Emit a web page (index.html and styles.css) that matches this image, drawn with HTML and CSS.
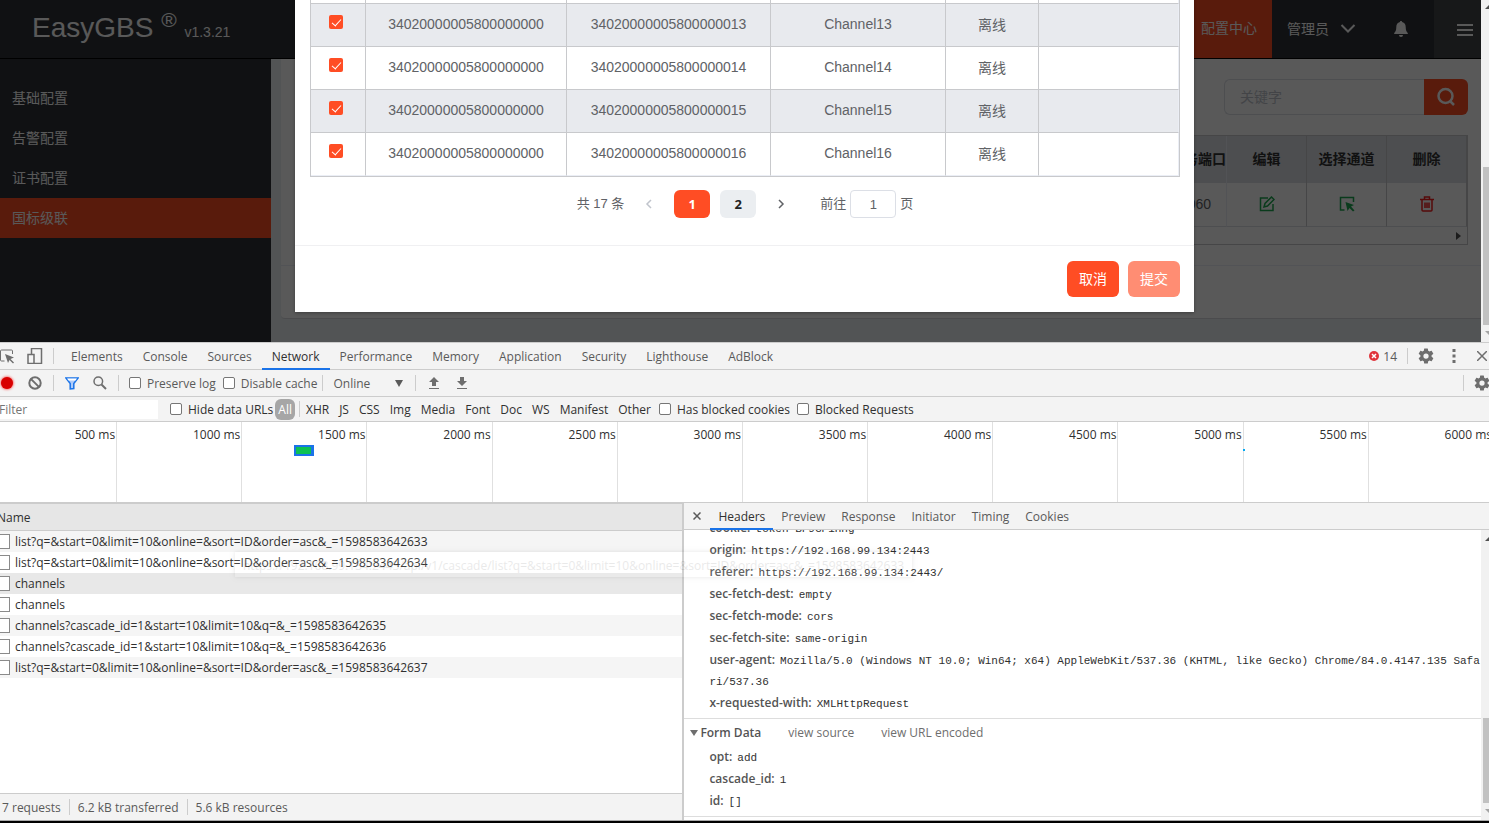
FILE: index.html
```html
<!DOCTYPE html>
<html lang="zh-CN">
<head>
  <meta charset="UTF-8" />
  <meta name="viewport" content="width=device-width, initial-scale=1.0"/>
  <title>EasyGBS</title>
  <link rel="stylesheet" href="styles.css">
</head>
<body>

  <div class="app">
    <div class="page">
      <header class="main-header">
        <a class="brand" href="#">EasyGBS <sup>®</sup> <small>v1.3.21</small></a>
        <nav class="top-nav">
          <a class="active" href="#">配置中心</a>
          <a class="user" href="#">管理员
            <svg width="16" height="16" viewBox="0 0 16 16"><path d="M1.500 4L8 10.500L14.500 4" fill="none" stroke="currentColor" stroke-width="2"/></svg>
          </a>
          <a class="bell" href="#" aria-label="消息">
            <svg width="16" height="16" viewBox="0 0 16 16"><path d="M8 0c.7 0 1.100.5 1.100 1.100C11.600 1.700 12.700 3.700 12.700 6c0 3.500.8 4.800 2.100 6v1H1.200v-1c1.300-1.200 2.100-2.500 2.100-6 0-2.300 1.100-4.300 3.600-4.900C6.900.5 7.300 0 8 0zM6 14h4a2 2 0 0 1-4 0z" fill="currentColor"/></svg>
          </a>
          <button class="menu-btn" aria-label="菜单">
            <svg width="18" height="14" viewBox="0 0 18 14"><path d="M1 2h16M1 7h16M1 12h16" stroke="currentColor" stroke-width="2"/></svg>
          </button>
        </nav>
      </header>

      <div class="wrapper">
        <aside class="sidebar">
          <a href="#">基础配置</a>
          <a href="#">告警配置</a>
          <a href="#">证书配置</a>
          <a class="active" href="#">国标级联</a>
        </aside>
        <main class="content">
          <div class="card">
            <div class="card-body">
              <form class="search">
                <input type="text" placeholder="关键字" aria-label="关键字">
                <button type="button" aria-label="搜索">
                  <svg width="20" height="20" viewBox="0 0 20 20"><circle cx="9.500" cy="9" r="7" fill="none" stroke="currentColor" stroke-width="2.500"/><path d="M14.500 14.500L18 18" stroke="currentColor" stroke-width="2.500"/></svg>
                </button>
              </form>
              <div class="cascade">
                <table>
                  <thead>
                    <tr><th class="rest">服务端口</th><th>编辑</th><th>选择通道</th><th>删除</th></tr>
                  </thead>
                  <tbody>
                    <tr>
                      <td class="rest">5060</td>
                      <td>
                        <a class="green" href="#" aria-label="编辑"><svg width="16" height="16" viewBox="0 0 16 16"><path d="M9 2H1.500v12.500H14V8" fill="none" stroke="currentColor" stroke-width="1.500"/><path d="M5 11l1-3.500L12.500 1 15 3.500 8.500 10z" fill="none" stroke="currentColor" stroke-width="1.500"/></svg></a>
                      </td>
                      <td>
                        <a class="green" href="#" aria-label="选择通道"><svg width="16" height="16" viewBox="0 0 16 16"><path d="M5.500 14H1.500V1.500h13V6" fill="none" stroke="currentColor" stroke-width="1.500"/><path d="M6.500 6l8.500 3-3 1.500 3.500 4-1.500 1-3.500-3.500L8.500 15z" fill="currentColor"/></svg></a>
                      </td>
                      <td>
                        <a class="red" href="#" aria-label="删除"><svg width="16" height="16" viewBox="0 0 16 16"><path d="M1 3.500h14M5.500 3V1h5v2M3 3.500V14q0 1 1 1h8q1 0 1-1V3.500M6 6.500v5.500M8 6.500v5.500M10 6.500v5.500" fill="none" stroke="currentColor" stroke-width="1.500"/></svg></a>
                      </td>
                    </tr>
                  </tbody>
                </table>
                <div class="hscroll">
                  <svg width="5" height="8" viewBox="0 0 5 8"><path d="M0 0l5 4-5 4z" fill="#505050"/></svg>
                </div>
              </div>
            </div>
            <div class="card-footer"></div>
          </div>
        </main>
      </div>
    </div>

    <div class="scrollbar">
      <svg width="15" height="17" viewBox="0 0 15 17"><path d="M4 9l4-4 4 4z" fill="#505050"/></svg>
      <div class="thumb page-thumb"></div>
      <svg width="15" height="17" viewBox="0 0 15 17"><path d="M4 6l4 4 4-4z" fill="#a3a3a3"/></svg>
    </div>

    <div class="overlay">
      <div class="modal">
        <div class="modal-body">
          <div class="channels">
            <table>
              <colgroup><col class="c-check"><col class="c-device"><col class="c-channel"><col class="c-name"><col class="c-state"><col></colgroup>
              <tbody>
                <tr><td></td><td></td><td></td><td></td><td></td><td></td></tr>
                <tr><td><input type="checkbox" checked aria-label="Channel13"></td><td>34020000005800000000</td><td>34020000005800000013</td><td>Channel13</td><td>离线</td><td></td></tr>
                <tr><td><input type="checkbox" checked aria-label="Channel14"></td><td>34020000005800000000</td><td>34020000005800000014</td><td>Channel14</td><td>离线</td><td></td></tr>
                <tr><td><input type="checkbox" checked aria-label="Channel15"></td><td>34020000005800000000</td><td>34020000005800000015</td><td>Channel15</td><td>离线</td><td></td></tr>
                <tr><td><input type="checkbox" checked aria-label="Channel16"></td><td>34020000005800000000</td><td>34020000005800000016</td><td>Channel16</td><td>离线</td><td></td></tr>
              </tbody>
            </table>
          </div>
          <div class="pagination">
            <span class="total">共 17 条</span>
            <button class="arrow" disabled aria-label="上一页"><svg width="8" height="10" viewBox="0 0 8 10"><path d="M6 1L2 5l4 4" fill="none" stroke="currentColor" stroke-width="1.500"/></svg></button>
            <button class="num active">1</button>
            <button class="num">2</button>
            <button class="arrow" aria-label="下一页"><svg width="8" height="10" viewBox="0 0 8 10"><path d="M2 1l4 4-4 4" fill="none" stroke="currentColor" stroke-width="1.500"/></svg></button>
            <label class="jump"><span>前往</span> <input type="text" value="1"> <span>页</span></label>
          </div>
        </div>
        <div class="modal-footer">
          <button class="btn">取消</button>
          <button class="btn" disabled>提交</button>
        </div>
      </div>
    </div>
  </div>

  <div class="devtools">
    <div class="bar tabbar">
      <button class="icon" aria-label="Inspect"><svg width="16" height="16" viewBox="0 0 16 16"><path d="M5.500 13H2.500q-1 0-1-1V3q0-1 1-1h10q1 0 1 1v3" fill="none" stroke="currentColor"/><path d="M6 6l9 3.500-3.500 1.500 3.500 3.500-1 1-3.500-3.500L9 15z" fill="currentColor"/></svg></button>
      <button class="icon" aria-label="Device"><svg width="16" height="16" viewBox="0 0 16 16"><path d="M4.500 6V.5h10v15h-7M1 6.500h6v9H1z" fill="none" stroke="currentColor" stroke-width="1.500"/></svg></button>
      <i class="sep"></i>
      <nav class="tabs">
        <a href="#">Elements</a><a href="#">Console</a><a href="#">Sources</a><a class="active" href="#">Network</a><a href="#">Performance</a><a href="#">Memory</a><a href="#">Application</a><a href="#">Security</a><a href="#">Lighthouse</a><a href="#">AdBlock</a>
      </nav>
      <a class="errors" href="#"><svg width="10" height="10" viewBox="0 0 10 10"><circle cx="5" cy="5" r="5" fill="#e0343b"/><path d="M3 3l4 4M7 3L3 7" stroke="#fff" stroke-width="1.500"/></svg>14</a>
      <i class="sep"></i>
      <button class="icon" aria-label="Settings"><svg width="18" height="18" viewBox="0 0 24 24"><use href="#gear"/></svg></button>
      <button class="icon" aria-label="More"><svg width="4" height="14" viewBox="0 0 4 14"><path d="M.5 0h3v3h-3zM.5 5.500h3v3h-3zM.5 11h3v3h-3z" fill="currentColor"/></svg></button>
      <button class="icon" aria-label="Close"><svg width="10" height="10" viewBox="0 0 10 10"><path d="M0 0l10 10M10 0L0 10" stroke="currentColor" stroke-width="1.500"/></svg></button>
    </div>

    <div class="bar">
      <button class="icon record" aria-label="Record"></button>
      <button class="icon" aria-label="Clear"><svg width="14" height="14" viewBox="0 0 14 14"><path d="M2.600 2.600l8.800 8.800" stroke="currentColor" stroke-width="2"/><circle cx="7" cy="7" r="5.700" fill="none" stroke="currentColor" stroke-width="2"/></svg></button>
      <i class="sep"></i>
      <button class="icon blue" aria-label="Filter"><svg width="14" height="13" viewBox="0 0 14 13"><path d="M1 1h12L8.800 6.500V11.500L5.200 12V6.500z" fill="#aecbfa" stroke="currentColor" stroke-width="1.500"/><path d="M2 1.500h10L10.500 3.500h-7z" fill="#fff"/></svg></button>
      <button class="icon" aria-label="Search"><svg width="14" height="14" viewBox="0 0 14 14"><circle cx="5.300" cy="5.300" r="4.300" fill="none" stroke="currentColor" stroke-width="1.500"/><path d="M8.500 8.500L13 13" stroke="currentColor" stroke-width="2"/></svg></button>
      <i class="sep"></i>
      <label class="check"><input type="checkbox">Preserve log</label>
      <label class="check"><input type="checkbox">Disable cache</label>
      <i class="sep"></i>
      <div class="throttle">
        <select aria-label="Throttling"><option>Online</option></select>
        <svg width="8" height="7" viewBox="0 0 8 7"><path d="M0 0h8L4 7z" fill="currentColor"/></svg>
      </div>
      <i class="sep"></i>
      <button class="icon" aria-label="Import"><svg width="10" height="12" viewBox="0 0 10 12"><path d="M5 0l5 5H7v4H3V5H0zM0 11h10v1H0z" fill="currentColor"/></svg></button>
      <button class="icon" aria-label="Export"><svg width="10" height="12" viewBox="0 0 10 12"><path d="M3 0h4v4h3L5 9 0 4h3zM0 11h10v1H0z" fill="currentColor"/></svg></button>
      <span class="grow"></span>
      <i class="sep"></i>
      <button class="icon" aria-label="Network settings"><svg width="18" height="18" viewBox="0 0 24 24"><path id="gear" fill="currentColor" fill-rule="evenodd" d="M19.430 12.980c.04-.32.070-.64.070-.98s-.03-.66-.07-.98l2.110-1.650c.19-.15.24-.42.12-.64l-2-3.460c-.12-.22-.39-.3-.61-.22l-2.490 1c-.52-.4-1.080-.73-1.690-.98l-.38-2.650A.49.49 0 0 0 14 2h-4c-.25 0-.46.18-.49.42l-.38 2.650c-.61.25-1.170.59-1.690.98l-2.490-1c-.23-.09-.49 0-.61.22l-2 3.460c-.13.22-.07.49.12.64l2.110 1.650c-.04.32-.07.65-.07.98s.03.66.07.98l-2.110 1.650c-.19.15-.24.42-.12.64l2 3.460c.12.22.39.3.61.22l2.490-1c.52.4 1.080.73 1.690.98l.38 2.650c.03.24.24.42.49.42h4c.25 0 .46-.18.49-.42l.38-2.650c.61-.25 1.170-.59 1.690-.98l2.490 1c.23.09.49 0 .61-.22l2-3.460c.12-.22.070-.49-.12-.64l-2.110-1.650zM12 15.500a3.500 3.500 0 1 1 0-7 3.500 3.500 0 0 1 0 7z"/></svg></button>
    </div>

    <div class="bar filterbar">
      <input class="filter-input" type="text" placeholder="Filter" aria-label="Filter">
      <label class="check"><input type="checkbox">Hide data URLs</label>
      <div class="types">
        <button class="active">All</button><i class="sep"></i><button>XHR</button><button>JS</button><button>CSS</button><button>Img</button><button>Media</button><button>Font</button><button>Doc</button><button>WS</button><button>Manifest</button><button>Other</button>
      </div>
      <label class="check"><input type="checkbox">Has blocked cookies</label>
      <label class="check"><input type="checkbox">Blocked Requests</label>
    </div>

    <div class="timeline">
      <div class="ticks">
        <span>500 ms</span><span>1000 ms</span><span>1500 ms</span><span>2000 ms</span><span>2500 ms</span><span>3000 ms</span><span>3500 ms</span><span>4000 ms</span><span>4500 ms</span><span>5000 ms</span><span>5500 ms</span><span>6000 ms</span>
      </div>
      <div class="span-main"></div>
      <div class="span-late"></div>
    </div>

    <div class="panes">
      <section class="requests">
        <div class="name-head">Name</div>
        <ul>
          <li><i></i>list?q=&amp;start=0&amp;limit=10&amp;online=&amp;sort=ID&amp;order=asc&amp;_=1598583642633</li>
          <li><i></i>list?q=&amp;start=0&amp;limit=10&amp;online=&amp;sort=ID&amp;order=asc&amp;_=1598583642634</li>
          <li class="selected"><i></i>channels</li>
          <li><i></i>channels</li>
          <li><i></i>channels?cascade_id=1&amp;start=10&amp;limit=10&amp;q=&amp;_=1598583642635</li>
          <li><i></i>channels?cascade_id=1&amp;start=10&amp;limit=10&amp;q=&amp;_=1598583642636</li>
          <li><i></i>list?q=&amp;start=0&amp;limit=10&amp;online=&amp;sort=ID&amp;order=asc&amp;_=1598583642637</li>
        </ul>
        <div class="summary">
          <span>7 requests</span><i class="sep"></i><span>6.2 kB transferred</span><i class="sep"></i><span>5.6 kB resources</span>
        </div>
      </section>

      <section class="details">
        <div class="bar">
          <button class="close" aria-label="Close details"><svg width="8" height="8" viewBox="0 0 8 8"><path d="M.5.5l7 7M7.500.5l-7 7" stroke="currentColor" stroke-width="1.500"/></svg></button>
          <nav class="tabs small">
            <a class="active" href="#">Headers</a><a href="#">Preview</a><a href="#">Response</a><a href="#">Initiator</a><a href="#">Timing</a><a href="#">Cookies</a>
          </nav>
        </div>
        <div class="details-main">
          <div class="details-body">
            <div class="group">
              <p><b>cookie:</b> <code>token=BF9GPiHHg</code></p>
              <p><b>origin:</b> <code>https://192.168.99.134:2443</code></p>
              <p><b>referer:</b> <code>https://192.168.99.134:2443/</code></p>
              <p><b>sec-fetch-dest:</b> <code>empty</code></p>
              <p><b>sec-fetch-mode:</b> <code>cors</code></p>
              <p><b>sec-fetch-site:</b> <code>same-origin</code></p>
              <p><b>user-agent:</b> <code>Mozilla/5.0 (Windows NT 10.0; Win64; x64) AppleWebKit/537.36 (KHTML, like Gecko) Chrome/84.0.4147.135 Safari/537.36</code></p>
              <p><b>x-requested-with:</b> <code>XMLHttpRequest</code></p>
            </div>
            <div class="group-head">
              <svg width="8" height="6" viewBox="0 0 8 6"><path d="M0 0h8L4 6z" fill="currentColor"/></svg>
              <b>Form Data</b><a href="#">view source</a><a href="#">view URL encoded</a>
            </div>
            <div class="group">
              <p><b>opt:</b> <code>add</code></p>
              <p><b>cascade_id:</b> <code>1</code></p>
              <p><b>id:</b> <code>[]</code></p>
            </div>
          </div>
          <div class="scrollbar">
            <svg width="15" height="17" viewBox="0 0 15 17"><path d="M4 11l4-4 4 4z" fill="#505050"/></svg>
            <div class="thumb details-thumb"></div>
            <svg width="15" height="17" viewBox="0 0 15 17"><path d="M4 6l4 4 4-4z" fill="#a3a3a3"/></svg>
          </div>
        </div>
      </section>

      <div class="tooltip">https://192.168.99.134:2443/api/v1/cascade/list?q=&amp;start=0&amp;limit=10&amp;online=&amp;sort=ID&amp;order=asc&amp;_=1598583642633</div>
    </div>
  </div>

</body>
</html>
```
FILE: styles.css
```css
* {
  box-sizing: border-box;
}
body {
  margin: 0;
  height: 100vh;
  display: flex;
  flex-direction: column;
  overflow: hidden;
  background: #000;
  font-family: "Liberation Sans", "Noto Sans CJK SC", sans-serif;
  font-size: 14px;
}
a {
  color: inherit;
  text-decoration: none;
}
button, input, select {
  font: inherit;
  color: inherit;
  margin: 0;
}
button {
  padding: 0;
  border: none;
  background: none;
  cursor: pointer;
}
svg {
  display: block;
}

/* ---------- app ---------- */
.app {
  position: relative;
  flex: 0 0 342px;
  display: flex;
  overflow: hidden;
}
.page {
  flex: 1;
  display: flex;
  flex-direction: column;
}
.main-header {
  height: 59px;
  display: flex;
  justify-content: space-between;
  background: #2e3238;
  border-bottom: 1px solid #000;
  color: #fff;
}
.brand {
  padding-left: 32px;
  font-size: 28px;
  line-height: 55px;
}
.brand sup {
  font-size: 21px;
  line-height: 1;
}
.brand small {
  font-size: 14px;
}
.top-nav {
  display: flex;
  line-height: 57px;
}
.top-nav .active {
  padding: 0 15px;
  background: #ff4d24;
}
.user {
  display: flex;
  align-items: center;
  gap: 11px;
  padding: 0 15px;
}
.bell {
  display: flex;
  align-items: center;
  padding: 0 25px 0 22px;
}
.menu-btn {
  display: flex;
  align-items: center;
  width: 47px;
  padding: 2px 0 0 22px;
  background: #424549;
}
.wrapper {
  flex: 1;
  display: flex;
}
.sidebar {
  width: 271px;
  padding-top: 19px;
  background: #2e3238;
  color: #fff;
}
.sidebar a {
  display: block;
  padding-left: 12px;
  line-height: 40px;
}
.sidebar .active {
  background: #ff4d24;
}
.content {
  flex: 1;
  padding-left: 10px;
  background: #ecf0f3;
}
.card {
  background: #fff;
  border-bottom: 1px solid #d6d8dc;
  border-radius: 0 0 0 4px;
}
.card-body {
  padding: 20px 13px 20px 20px;
}
.card-footer {
  height: 53px;
  border-top: 1px solid #ebeef5;
}
.search {
  display: flex;
  justify-content: flex-end;
  margin-bottom: 20px;
}
.search input {
  width: 200px;
  height: 36px;
  padding: 0 15px;
  border: 1px solid #dcdfe6;
  border-right: none;
  border-radius: 6px 0 0 6px;
  background: #fff;
}
.search input::placeholder {
  color: #c0c4cc;
}
.search button {
  width: 44px;
  display: flex;
  align-items: center;
  justify-content: center;
  border-radius: 0 6px 6px 0;
  background: #ff4d24;
  color: #fff;
}
.cascade {
  border: 1px solid #c8c9cc;
}
.cascade table {
  width: 100%;
  border-spacing: 0;
  text-align: center;
}
.cascade th {
  width: 80px;
  height: 47px;
  padding: 0 0 3px;
  background: #dcdfe6;
  border-right: 1px solid #c8c9cc;
  color: #333;
  font-weight: bold;
}
.cascade td {
  height: 44px;
  padding: 0 0 1px;
  border-right: 1px solid #c8c9cc;
  border-bottom: 1px solid #dcdfe6;
  color: #606266;
}
.cascade .rest {
  width: auto;
  padding-right: 15px;
  border-right-color: #ebeef5;
  text-align: right;
}
.cascade th.rest {
  padding-right: 0;
}
.cascade a svg {
  margin: 0 auto;
}
.green {
  color: #1fa951;
}
.red {
  color: #f51c1c;
}
.hscroll {
  height: 17px;
  display: flex;
  align-items: center;
  justify-content: flex-end;
  padding-right: 6px;
}

/* modal */
.overlay {
  position: absolute;
  inset: 0 8px 0 0;
  display: flex;
  align-items: flex-end;
  justify-content: center;
  padding: 0 0 30px 8px;
  background: rgba(0, 0, 0, 0.65);
}
.modal {
  width: 899px;
  background: #fff;
  box-shadow: 0 1px 3px rgba(0, 0, 0, 0.3);
}
.modal-body {
  padding: 15px 14px 27px 15px;
}
.channels {
  border: 1px solid #c8c9cc;
}
.channels table {
  width: 100%;
  table-layout: fixed;
  border-spacing: 0;
  text-align: center;
  color: #606266;
}
.c-check { width: 55px; }
.c-device { width: 201px; }
.c-channel { width: 204px; }
.c-name { width: 175px; }
.c-state { width: 93px; }
.channels td {
  height: 43px;
  padding: 0 0 2px;
  border-right: 1px solid #c8c9cc;
  border-bottom: 1px solid #c8c9cc;
}
.channels td:last-child {
  border-right-color: #ebeef5;
}
.channels tr:last-child td {
  border-bottom-color: #ebeef5;
}
.channels tr:nth-child(even) {
  background: #e8eaee;
}
.channels input {
  appearance: none;
  display: block;
  width: 14px;
  height: 14px;
  margin: 0 auto 5px 18px;
  border-radius: 2px;
  background: #ff4d24;
}
.channels input::after {
  content: "";
  display: block;
  width: 4px;
  height: 8px;
  margin: 2px 0 0 5px;
  border: solid #fff;
  border-width: 0 1px 1px 0;
  transform: rotate(42deg);
}
.pagination {
  display: flex;
  align-items: center;
  justify-content: center;
  gap: 10px;
  margin-top: 13px;
  font-size: 13px;
  color: #606266;
}
.pagination button {
  height: 28px;
  display: flex;
  align-items: center;
  justify-content: center;
}
.pagination span {
  padding-bottom: 3px;
}
.arrow {
  width: 30px;
}
.arrow:disabled {
  color: #c0c4cc;
}
.num {
  width: 36px;
  border-radius: 6px;
  background: #ebeef1;
  color: #222;
  font-family: "Open Sans", sans-serif;
  font-weight: bold;
}
.num.active {
  background: #ff4d24;
  color: #fff;
}
.jump {
  display: flex;
  align-items: center;
  gap: 4px;
  margin-left: 14px;
}
.jump input {
  width: 46px;
  height: 28px;
  border: 1px solid #dcdfe6;
  border-radius: 4px;
  text-align: center;
}
.modal-footer {
  display: flex;
  justify-content: flex-end;
  gap: 9px;
  padding: 15px 14px 15px 15px;
  border-top: 1px solid #f0f0f2;
}
.btn {
  width: 52px;
  height: 36px;
  padding-bottom: 2px;
  border-radius: 6px;
  background: #ff4d24;
  color: #fff;
}
.btn:disabled {
  background: #ff8d73;
}

/* scrollbars */
.scrollbar {
  display: flex;
  flex-direction: column;
  flex: 0 0 8px;
  overflow: hidden;
  background: #f1f1f1;
}
.scrollbar svg {
  flex: none;
}
.thumb {
  margin-left: 2px;
  background: #c1c1c1;
}
.page-thumb {
  height: 158px;
  margin-top: auto;
}
.details-thumb {
  height: 85px;
  margin-top: auto;
}

/* ---------- devtools ---------- */
.devtools {
  flex: 1;
  min-height: 0;
  display: flex;
  flex-direction: column;
  margin: 0 -7px 2px;
  border-top: 1px solid #ccc;
  border-bottom: 1px solid #aaa;
  background: #fff;
  color: #303030;
  font-family: "Open Sans", sans-serif;
  font-size: 12px;
}
.bar {
  flex: none;
  height: 27px;
  display: flex;
  align-items: center;
  background: #f3f3f3;
  border-bottom: 1px solid #ccc;
  color: #5a5a5a;
}
.icon {
  width: 28px;
  height: 26px;
  display: flex;
  align-items: center;
  justify-content: center;
  color: #6e6e6e;
}
.blue {
  color: #1a73e8;
}
.record::before {
  content: "";
  width: 12px;
  height: 12px;
  border-radius: 50%;
  background: #d80000;
  box-shadow: 0 0 3px #f00;
}
.sep {
  flex: none;
  width: 1px;
  height: 16px;
  margin: 0 4px;
  background: #ccc;
}
.tabs {
  flex: 1;
  display: flex;
  align-self: stretch;
  margin-left: 3px;
}
.tabs a {
  height: 27px;
  padding: 0 10px;
  line-height: 27px;
}
.tabs.small {
  margin-left: 2px;
}
.tabs.small a {
  padding: 0 8px;
}
.tabs .active {
  border-bottom: 2px solid #1a73e8;
  color: #303030;
}
.errors {
  display: flex;
  align-items: center;
  gap: 4px;
  padding-right: 6px;
}
.check {
  display: flex;
  align-items: center;
  gap: 6px;
  margin-left: 6px;
}
.check + .check {
  margin-left: 7px;
}
.check input {
  appearance: none;
  width: 12px;
  height: 12px;
  border: 1px solid #767676;
  border-radius: 2px;
  background: #fff;
}
.check + .sep {
  margin-left: 5px;
}
.throttle {
  display: flex;
  align-items: center;
  margin: 0 8px 0 6px;
}
.throttle select {
  appearance: none;
  width: 62px;
  padding: 0;
  border: none;
  background: none;
  outline: none;
}
.grow {
  flex: 1;
}
.filterbar {
  height: 25px;
  color: #303030;
}
.filter-input {
  width: 165px;
  height: 19px;
  margin-right: 6px;
  padding: 0 0 0 6px;
  border: none;
  background: #fff;
}
.filter-input::placeholder {
  color: #757575;
}
.types {
  display: flex;
  align-items: center;
  gap: 10px;
  margin: 0 2px;
}
.types .active {
  height: 21px;
  padding: 0 3px;
  border-radius: 6px;
  background: #a6a6a6;
  color: #fff;
}
.types .sep {
  margin: 0 -4px 0 -6px;
}
.timeline {
  position: relative;
  flex: 0 0 81px;
  overflow: hidden;
  border-bottom: 1px solid #ccc;
}
.ticks {
  height: 100%;
  display: grid;
  grid-template-columns: repeat(12, 1fr);
  margin: 0 2px 0 -1px;
}
.ticks span {
  padding: 4px 1px 0 0;
  border-right: 1px solid #e0e0e0;
  text-align: right;
}
/* bars are plotted on the time axis */
.span-main, .span-late {
  position: absolute;
}
.span-main {
  left: 301px;
  top: 23px;
  width: 20px;
  height: 11px;
  border: 2px solid #1a73e8;
  border-right-width: 3px;
  background: #0dc152;
}
.span-late {
  left: 1250px;
  top: 27px;
  width: 2px;
  height: 2px;
  background: #03a9f4;
}
.panes {
  position: relative;
  flex: 1;
  min-height: 0;
  display: flex;
}
.requests {
  flex: 0 0 46%;
  display: flex;
  flex-direction: column;
  border-right: 2px solid #ccc;
}
.name-head {
  height: 28px;
  padding-left: 4px;
  line-height: 28px;
  background: #e6e6e6;
  border-top: 1px solid #ccc;
  border-bottom: 1px solid #ccc;
}
.requests ul {
  flex: 1;
  margin: 0;
  padding: 0;
  list-style: none;
}
.requests li {
  height: 21px;
  display: flex;
  align-items: center;
  gap: 5px;
}
.requests li:nth-child(odd) {
  background: #f5f5f5;
}
.requests li.selected {
  background: #e8e8e8;
}
.requests li i {
  width: 17px;
  height: 15px;
  border: 1px solid #8a8a8a;
  background: #fff;
}
.summary {
  height: 27px;
  display: flex;
  align-items: center;
  gap: 4px;
  padding-left: 9px;
  border-top: 1px solid #ccc;
  background: #f3f3f3;
  color: #5a5a5a;
}
.details {
  flex: 1;
  min-width: 0;
  display: flex;
  flex-direction: column;
}
.close {
  padding: 0 7px 0 9px;
  color: #5a5a5a;
}
.details-main {
  flex: 1;
  min-height: 0;
  display: flex;
}
.details-main .scrollbar {
  flex-basis: 15px;
}
.details-body {
  flex: 1;
  display: flex;
  flex-direction: column;
  justify-content: flex-end;
  overflow: hidden;
  padding-bottom: 3px;
}
.group {
  flex: none;
  padding: 0 0 4px 25px;
  border-bottom: 1px solid #ddd;
}
.group p {
  margin: 0 0 1px;
  line-height: 21px;
  word-break: break-all;
}
.group b, .group-head b {
  color: #545454;
  font-weight: 600;
}
.group code {
  margin-left: 2px;
  font-family: "Liberation Mono", monospace;
  font-size: 11px;
  line-height: 1;
}
.group-head {
  flex: none;
  display: flex;
  align-items: center;
  height: 27px;
  padding-left: 6px;
  color: #6e6e6e;
}
.group-head b {
  margin-left: 2px;
}
.group-head a {
  margin-left: 27px;
}
/* request url hint, fading out */
.tooltip {
  position: absolute;
  left: 242px;
  top: 49px;
  height: 25px;
  padding: 0 8px;
  line-height: 27px;
  background: #fff;
  box-shadow: 0 0 4px #000;
  opacity: 0.1;
  white-space: nowrap;
}
```
